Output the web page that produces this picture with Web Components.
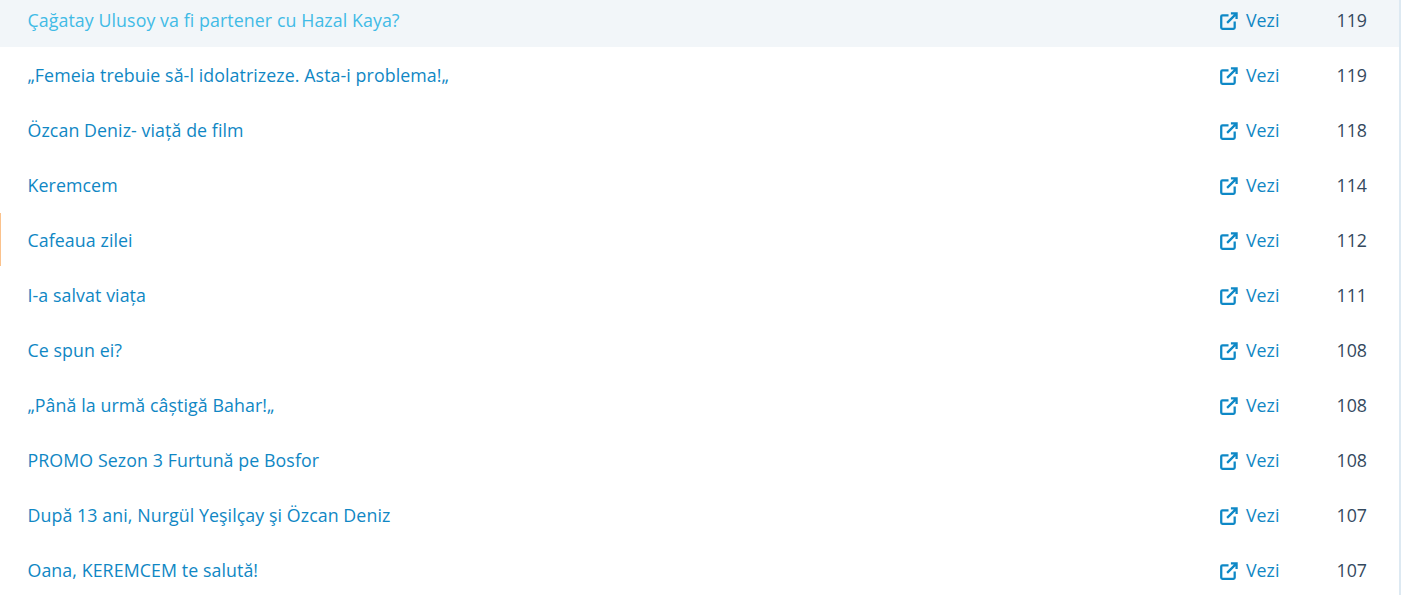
<!DOCTYPE html>
<html>
<head>
<meta charset="utf-8">
<style>
  html, body { margin: 0; background: #fff; overflow: hidden; }
</style>
</head>
<body>
<video-list>
  <video-row class="hover" views="119">Çağatay Ulusoy va fi partener cu Hazal Kaya?</video-row>
  <video-row views="119">„Femeia trebuie să-l idolatrizeze. Asta-i problema!„</video-row>
  <video-row views="118">Özcan Deniz- viață de film</video-row>
  <video-row views="114">Keremcem</video-row>
  <video-row marked views="112">Cafeaua zilei</video-row>
  <video-row views="111">I-a salvat viața</video-row>
  <video-row views="108">Ce spun ei?</video-row>
  <video-row views="108">„Până la urmă câștigă Bahar!„</video-row>
  <video-row views="108">PROMO Sezon 3 Furtună pe Bosfor</video-row>
  <video-row views="107">După 13 ani, Nurgül Yeşilçay şi Özcan Deniz</video-row>
  <video-row views="107">Oana, KEREMCEM te salută!</video-row>
</video-list>
<script>
class VideoList extends HTMLElement {
  constructor() {
    super();
    this.attachShadow({ mode: "open" });
  }
  connectedCallback() {
    this.shadowRoot.innerHTML = `
    <style>
      :host {
        display: flex;
        flex-direction: column;
        margin-top: -8px;
        height: 620px;
        font-family: "Open Sans", sans-serif;
        font-size: 17.8px;
        border-right: 2px solid #dde9f2;
      }
    </style>
    <slot></slot>
    `;
  }
}
customElements.define("video-list", VideoList);

class VideoRow extends HTMLElement {
  constructor() {
    super();
    this.attachShadow({ mode: "open" });
  }
  connectedCallback() {
    this.shadowRoot.innerHTML = `
    <style>
      :host {
        display: grid;
        grid-template-columns: 1fr 92px 87px;
        align-items: center;
        height: 55px;
        padding-left: 27.5px;
        box-sizing: border-box;
        color: #1087c4;
        position: relative;
      }
      :host(.hover) { background: #f2f6f9; }
      :host(.hover) .title { color: #41bbe6; }
      :host([marked])::before {
        content: "";
        position: absolute;
        left: 0;
        top: 1px;
        bottom: 1px;
        width: 1px;
        background: #fbc28c;
      }
      .title { letter-spacing: 0.08px; }
      .link { display: flex; align-items: center; gap: 8px; }
      svg { width: 18px; height: 18px; display: block; margin-top: 3px; }
      .views { color: #34495e; text-align: right; padding-right: 32px; }
    </style>
    <span class="title"><slot></slot></span>
    <span class="link">
      <svg viewBox="0 0 19 19" fill="none" stroke="#0e88c6" stroke-width="2.4">
        <path d="M9 3.5H2.6a1.3 1.3 0 0 0-1.3 1.3v11.6a1.3 1.3 0 0 0 1.3 1.3h11.6a1.3 1.3 0 0 0 1.3-1.3V10"/>
        <path d="M7.5 11.5L17 2M11.5 1.5h6v6"/>
      </svg>
      Vezi
    </span>
    <span class="views">${this.getAttribute("views")}</span>
    `;
  }
}
customElements.define("video-row", VideoRow);
</script>
</body>
</html>
